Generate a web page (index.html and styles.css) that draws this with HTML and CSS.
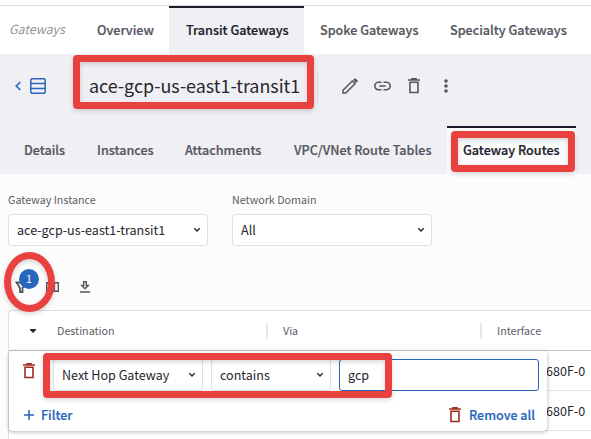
FILE: index.html
```html
<!DOCTYPE html>
<html lang="en">
<head>
<meta charset="utf-8">
<title>Gateway Routes</title>
<link rel="stylesheet" href="styles.css">
</head>
<body>
<svg class="defs" width="0" height="0">
  <symbol id="trash" viewBox="0 0 12 16"><path d="M2 4.2h8v10.3H2z" fill="none" stroke="currentColor" stroke-width="1.6"/><path d="M0 1.2h3.2V0h5.6v1.2H12v1.5H0z" fill="currentColor"/></symbol>
  <symbol id="chevron" viewBox="0 0 8 6"><path d="M1.3 1.3 4 4l2.7-2.7" fill="none" stroke="currentColor" stroke-width="1.4"/></symbol>
</svg>
<nav class="topnav">
  <span class="crumb">Gateways</span>
  <a class="tab overview">Overview</a>
  <a class="tab transit active">Transit Gateways</a>
  <a class="tab spoke">Spoke Gateways</a>
  <a class="tab specialty">Specialty Gateways</a>
</nav>
<header class="head">
  <div class="titlebar">
    <svg class="back" width="8" height="10" viewBox="0 0 8 10"><path d="M6.300 1 2.300 5l4 4" fill="none" stroke="currentColor" stroke-width="1.7"/></svg>
    <svg class="list" width="16" height="16" viewBox="0 0 16 16"><path d="M1.7.8h12.6l.9.9v12.6l-.9.9H1.7l-.9-.9V1.7zM1 5.6h14M1 10.4h14" fill="none" stroke="currentColor" stroke-width="1.5"/></svg>
    <h1>ace-gcp-us-east1-transit1</h1>
    <div class="actions">
      <svg width="16" height="16" viewBox="0 0 16 16"><path d="M1 15v-2.8L10.2 3l2.8 2.8L3.8 15z" fill="none" stroke="currentColor" stroke-width="1.5"/><path d="m11 2 1.6-1.600q.5-.5 1 0l2 2q.5.5 0 1L14 5z" fill="currentColor"/></svg>
      <svg width="17" height="10" viewBox="0 0 17 10"><path d="M7.500 1.200H4.600a3.800 3.800 0 0 0 0 7.600h2.900M9.500 1.200h2.900a3.800 3.800 0 0 1 0 7.600H9.500M5.300 5h6.400" fill="none" stroke="currentColor" stroke-width="1.6"/></svg>
      <svg width="12" height="16"><use href="#trash"/></svg>
      <svg width="4" height="14" viewBox="0 0 4 14" fill="currentColor"><circle cx="2" cy="2" r="1.8"/><circle cx="2" cy="7" r="1.8"/><circle cx="2" cy="12" r="1.8"/></svg>
    </div>
  </div>
  <nav class="subnav">
    <a class="tab details">Details</a>
    <a class="tab instances">Instances</a>
    <a class="tab attachments">Attachments</a>
    <a class="tab tables">VPC/VNet Route Tables</a>
    <a class="tab routes active">Gateway Routes</a>
  </nav>
</header>
<main>
  <div class="fields">
    <label class="field"><span class="label">Gateway Instance</span>
      <span class="select"><span>ace-gcp-us-east1-transit1</span><svg width="8" height="6"><use href="#chevron"/></svg></span></label>
    <label class="field"><span class="label">Network Domain</span>
      <span class="select"><span>All</span><svg width="8" height="6"><use href="#chevron"/></svg></span></label>
  </div>
  <div class="toolbar">
    <div class="filter">
      <svg width="14" height="12" viewBox="0 0 14 12"><path d="M1.500 1.500h10L7.500 7V11H5V7z" fill="none" stroke="currentColor" stroke-width="1.8"/></svg>
      <span class="badge">1</span>
    </div>
    <svg width="13" height="10" viewBox="0 0 13 10"><path d="M.7.7h11.6v8.6H.7zM4.600 1v8M8.400 1v8" fill="none" stroke="currentColor" stroke-width="1.4"/></svg>
    <svg width="10" height="12" viewBox="0 0 10 12"><path d="M3.700.700h2.600v3.800h1.900L5 7.700 1.800 4.500h1.900zM0 11h10" fill="none" stroke="currentColor" stroke-width="1.400"/></svg>
  </div>
  <section class="table">
    <div class="row thead">
      <svg width="6" height="4" viewBox="0 0 6 4"><path d="M0 0h6v1L3 4 0 1z" fill="currentColor"/></svg>
      <span class="th dest">Destination</span>
      <span class="th via">Via</span>
      <span class="th iface">Interface</span>
    </div>
    <div class="row"><span class="td">680F-0</span></div>
    <div class="row"><span class="td">680F-0</span></div>
    <div class="popup">
      <div class="rule">
        <svg class="danger" width="12" height="16"><use href="#trash"/></svg>
        <span class="select column"><span>Next Hop Gateway</span><svg width="8" height="6"><use href="#chevron"/></svg></span>
        <span class="select operator"><span>contains</span><svg width="8" height="6"><use href="#chevron"/></svg></span>
        <span class="select value"><span>gcp</span></span>
      </div>
      <div class="links">
        <svg width="10" height="10" viewBox="0 0 10 10"><path d="M5 0v10M0 5h10" stroke="currentColor" stroke-width="1.6"/></svg>
        <a class="add">Filter</a>
        <svg class="danger" width="12" height="16"><use href="#trash"/></svg>
        <a class="remove">Remove all</a>
      </div>
    </div>
  </section>
</main>
<div class="mark mark-title"></div>
<div class="mark mark-tab"></div>
<div class="mark mark-badge"></div>
<div class="mark mark-rule"></div>
</body>
</html>
```
FILE: styles.css
```css
* { box-sizing: border-box; }
body {
  margin: 0;
  width: 591px;
  height: 439px;
  overflow: hidden;
  position: relative;
  background: #fcfcfd;
  color: #26262e;
  font: 12.56px/20px "Noto Sans CJK JP", "Noto Sans", sans-serif;
  white-space: nowrap;
}
svg { flex: none; display: block; }
.defs { position: absolute; }
.topnav {
  display: flex;
  height: 54px;
  padding: 6px 0 0 9px;
  background: linear-gradient(#fff 5px, #dfdfe2 5px, #dfdfe2 6px, #fff 6px);
}
.tab {
  height: 48px;
  border-top: 2px solid transparent;
  line-height: 43px;
  font-weight: 500;
  font-size: 12.6px;
  -webkit-text-stroke: .2px;
  color: #55555e;
}
.crumb { width: 72px; line-height: 47px; font-style: italic; font-size: 12.4px; color: #92929a; }
.overview { width: 88px; padding-left: 16px; }
.transit { width: 135px; padding-left: 17px; }
.spoke { width: 130px; padding-left: 16px; }
.specialty { padding-left: 16px; }
.active { color: #1c1c2b; border-color: #1c1c2b; background: #f0eff4; }
.head { height: 120px; background: #f0eff4; }
.titlebar { display: flex; align-items: center; height: 72px; padding: 0 0 8px 14px; }
.back, .list { color: #2866bd; }
.list { margin-left: 8px; }
h1 {
  margin: 0 0 0 27px;
  padding: 0 0 0 16px;
  width: 245px;
  height: 32px;
  border-right: 1px solid #dcdce1;
  font-size: 17.9px;
  line-height: 31px;
  font-weight: 400;
}
.actions { display: flex; align-items: center; color: #55555e; padding-left: 24px; gap: 16px; }
.actions svg:nth-child(3) { margin-left: 1px; }
.actions svg:last-child { margin-left: 8px; }
.subnav { display: flex; height: 48px; padding-left: 8px; }
.details { width: 73px; padding-left: 16px; }
.instances { width: 88px; padding-left: 16px; }
.attachments { width: 109px; padding-left: 16px; }
.tables { width: 169px; padding-left: 16px; }
.routes { width: 129px; padding-left: 16px; background: #fcfcfd; }
.fields { display: flex; gap: 24px; padding: 16px 8px 0; }
.field { display: block; width: 200px; }
.label { display: block; height: 24px; line-height: 20px; font-size: 10.74px; color: #5c5c66; }
.select {
  display: flex;
  align-items: center;
  justify-content: space-between;
  height: 32px;
  padding: 0 6px 0 8px;
  border: 1px solid #dedee5;
  border-radius: 3px;
  background: #fff;
}
.toolbar { display: flex; align-items: center; height: 64px; padding: 17px 0 0 15px; color: #55555e; }
.filter { position: relative; width: 31px; }
.badge {
  position: absolute;
  left: 4px;
  top: -12px;
  width: 20px;
  height: 20px;
  border-radius: 50%;
  background: #2866bd;
  color: #fff;
  text-align: center;
  font-size: 10.74px;
  line-height: 20px;
}
.toolbar > svg:last-child { margin-left: 21px; }
.table {
  position: relative;
  height: 129px;
  margin-left: 8px;
  border: 1px solid #dedee5;
  border-width: 1px 0 0 1px;
  border-radius: 4px 0 0 0;
  background: #fff;
}
.row { display: flex; align-items: center; height: 40px; border-bottom: 1px solid #e2e2e7; }
.thead { padding-left: 21px; border-color: #c8c8d0; }
.th { font-size: 10.74px; line-height: 16px; color: #5c5c66; border-right: 2px solid #e7e7ec; }
.dest { margin-left: 21px; width: 211px; }
.via { padding-left: 15px; width: 214px; }
.iface { padding-left: 15px; border: 0; }
.td { margin-left: 537px; }
.popup {
  position: absolute;
  left: 0;
  top: 40px;
  width: 538px;
  height: 80px;
  padding-top: 8px;
  border-radius: 4px;
  background: #fff;
  box-shadow: 0 1px 4px rgba(0, 0, 0, .3);
}
.rule { display: flex; align-items: center; padding-left: 14px; }
.rule .danger { margin-bottom: 8px; }
.danger { color: #a02d20; }
.column { width: 150px; margin-left: 18px; }
.operator { width: 120px; margin-left: 8px; }
.value { width: 200px; margin-left: 8px; border-color: #2866bd; }
.links { display: flex; align-items: center; height: 32px; margin-top: 8px; padding-left: 15px; color: #2866bd; font-weight: 500; }
.links a { -webkit-text-stroke: .2px; }
.add { margin-left: 7px; width: 408px; }
.remove { margin-left: 8px; }
.mark { position: absolute; border: 7px solid #e94040; border-radius: 4px; box-shadow: 0 2px 5px rgba(0, 0, 0, .16), inset 0 2px 5px rgba(0, 0, 0, .16); }
.mark-title { left: 73px; top: 55px; width: 241px; height: 54px; }
.mark-tab { left: 451px; top: 131px; width: 124px; height: 41px; }
.mark-badge { left: 4px; top: 252px; width: 51px; height: 60px; border-radius: 50%; }
.mark-rule { left: 43px; top: 353px; width: 349px; height: 45px; }
```
